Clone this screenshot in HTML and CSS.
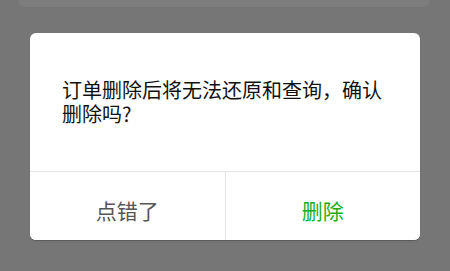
FILE: index.html
```html
<!DOCTYPE html>
<html lang="zh-CN">
<head>
<meta charset="utf-8">
<title>删除订单</title>
<link rel="stylesheet" href="styles.css">
</head>
<body>
<div class="page-card"></div>
<div class="dialog">
  <div class="dialog-body">
    <p class="dialog-text">订单删除后将无法还原和查询，确认删除吗?</p>
  </div>
  <div class="dialog-actions">
    <button class="btn btn-cancel">点错了</button>
    <button class="btn btn-confirm">删除</button>
  </div>
</div>
</body>
</html>
```
FILE: styles.css
```css
html, body {
  margin: 0;
  padding: 0;
  width: 450px;
  height: 271px;
  overflow: hidden;
  background: #767676;
  font-family: "Noto Sans CJK SC", "Noto Sans", sans-serif;
}

.page-card {
  height: 7px;
  margin: 0 20px 0 18px;
  background: #7d7d7d;
  border-radius: 0 0 11px 11px;
}

.dialog {
  margin: 26px 30px 0 30px;
  background: #fff;
  border-radius: 6px;
  box-shadow: 0 1px 1px rgba(0, 0, 0, 0.25);
  overflow: hidden;
}

.dialog-body {
  height: 139px;
  box-sizing: border-box;
  padding: 0 32px;
  display: flex;
  align-items: center;
  border-bottom: 1px solid #e5e5e5;
}

.dialog-text {
  margin: 0;
  font-size: 20px;
  line-height: 24px;
  color: #111;
}

.dialog-actions {
  display: flex;
  height: 68px;
}

.btn {
  flex: 1;
  border: 0;
  background: #fff;
  padding: 0;
  margin: 0;
  font-family: "Noto Sans CJK SC", "Noto Sans", sans-serif;
  font-size: 21px;
  line-height: 68px;
  padding-top: 4px;
}

.btn-cancel {
  color: #555;
  border-right: 1px solid #e5e5e5;
}

.btn-confirm {
  color: #1aad19;
}
```
